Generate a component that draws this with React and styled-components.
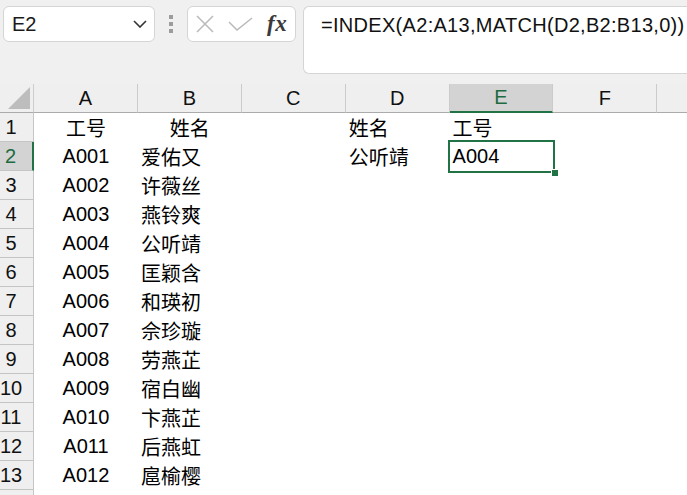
import styled, { createGlobalStyle } from 'styled-components';

const GlobalStyle = createGlobalStyle`
  html, body {
    margin: 0;
    background: #ffffff;
  }
  body {
    font-family: 'Liberation Sans', 'Noto Sans CJK SC', sans-serif;
    overflow: hidden;
  }
`;

const Window = styled.div`
  width: 687px;
  height: 495px;
  overflow: hidden;
  background: #ffffff;
`;

const TopBar = styled.div`
  display: flex;
  align-items: flex-start;
  height: 84px;
  box-sizing: border-box;
  padding: 6px 0 0 3px;
  background: #f0f0f0;
`;

const Box = styled.div`
  box-sizing: border-box;
  height: 36px;
  background: #ffffff;
  border: 1px solid #d5d5d5;
  border-radius: 6px;
`;

const NameBox = styled(Box)`
  width: 152px;
  display: flex;
  align-items: center;
  justify-content: space-between;
  padding: 0 7px 0 8px;
  font-size: 20px;
  color: #1a1a1a;
`;

const Grip = styled.div`
  width: 32px;
  height: 36px;
  display: flex;
  flex-direction: column;
  align-items: center;
  justify-content: center;
  gap: 3px;

  span {
    width: 4px;
    height: 4px;
    background: #9c9c9c;
  }
`;

const FormulaButtons = styled(Box)`
  width: 109px;
  display: flex;
  align-items: center;
  padding: 0 0 0 8px;
  gap: 14px;
`;

const Fx = styled.span`
  font-family: 'Liberation Serif', serif;
  font-style: italic;
  font-weight: bold;
  font-size: 23px;
  color: #3a3a3a;
  letter-spacing: 0.5px;
`;

const FormulaInput = styled(Box)`
  flex: 1;
  height: 68px;
  margin-left: 7px;
  border-right: none;
  border-radius: 6px 0 0 6px;
  padding-left: 17px;
  line-height: 36px;
  font-size: 20px;
  letter-spacing: 0.3px;
  color: #111111;
  white-space: nowrap;
  overflow: hidden;
`;

const Sheet = styled.div`
  display: grid;
  grid-template-columns: 34px repeat(7, 103.9px);
  grid-auto-rows: 29px;
`;

const Corner = styled.div`
  position: relative;
  background: #efefef;
  border-right: 1px solid #cdcdcd;
  border-bottom: 1px solid #ababab;

  svg {
    position: absolute;
    right: 3px;
    bottom: 3px;
  }
`;

const ColHeader = styled.div`
  box-sizing: border-box;
  display: flex;
  align-items: center;
  justify-content: center;
  font-size: 20px;
  background: ${(p) => (p.$active ? '#d3d3d3' : '#efefef')};
  color: ${(p) => (p.$active ? '#1d6b40' : '#111111')};
  border-right: 1px solid #cbcbcb;
  border-bottom: ${(p) => (p.$active ? '2px solid #217346' : '1px solid #ababab')};
`;

const RowHeader = styled.div`
  box-sizing: border-box;
  display: flex;
  align-items: center;
  justify-content: center;
  padding-right: 11px;
  font-size: 20px;
  background: ${(p) => (p.$active ? '#d3d3d3' : '#efefef')};
  color: ${(p) => (p.$active ? '#1d6b40' : '#111111')};
  border-right: ${(p) => (p.$active ? '2px solid #217346' : '1px solid #c6c6c6')};
  border-bottom: 1px solid #c4c4c4;
`;

const Cell = styled.div`
  position: relative;
  box-sizing: border-box;
  padding: 0 3px;
  display: flex;
  align-items: center;
  justify-content: ${(p) => (p.$align === 'center' ? 'center' : 'flex-start')};
  font-size: 20px;
  color: #000000;
  white-space: nowrap;
  outline: ${(p) => (p.$selected ? '2px solid #217346' : 'none')};
  z-index: ${(p) => (p.$selected ? 1 : 0)};
`;

const FillHandle = styled.span`
  position: absolute;
  right: -5px;
  bottom: -5px;
  width: 6px;
  height: 6px;
  background: #217346;
  border: 1px solid #ffffff;
  border-width: 1px 0 0 1px;
`;

// G is only partly on screen, so its letter falls outside the window
const COLS = ['A', 'B', 'C', 'D', 'E', 'F', 'G'];
const VISIBLE_LABELS = ['A', 'B', 'C', 'D', 'E', 'F'];

const DATA = [
  ['工号', '姓名', '', '姓名', '工号'],
  ['A001', '爱佑又', '', '公听靖', 'A004'],
  ['A002', '许薇丝'],
  ['A003', '燕铃爽'],
  ['A004', '公听靖'],
  ['A005', '匡颖含'],
  ['A006', '和瑛初'],
  ['A007', '佘珍璇'],
  ['A008', '劳燕芷'],
  ['A009', '宿白幽'],
  ['A010', '卞燕芷'],
  ['A011', '后燕虹'],
  ['A012', '扈榆樱'],
];

const alignFor = (row, col) => {
  if (col === 0) return 'center';
  if (col === 1 && row === 0) return 'center';
  return 'left';
};

const Chevron = () => (
  <svg width="14" height="8" viewBox="0 0 14 8">
    <path d="M1 1 L7 7 L13 1" fill="none" stroke="#333" strokeWidth="1.6" />
  </svg>
);

const CancelIcon = () => (
  <svg width="18" height="18" viewBox="0 0 18 18">
    <path d="M1 1 L17 17 M17 1 L1 17" fill="none" stroke="#b9b9b9" strokeWidth="1.5" />
  </svg>
);

const EnterIcon = () => (
  <svg width="25" height="14" viewBox="0 0 25 14">
    <path d="M1 5 L9 13 L24 1" fill="none" stroke="#b9b9b9" strokeWidth="1.5" />
  </svg>
);

export default function App() {
  return (
    <Window>
      <GlobalStyle />
      <TopBar>
        <NameBox>
          <span>E2</span>
          <Chevron />
        </NameBox>
        <Grip>
          <span />
          <span />
          <span />
        </Grip>
        <FormulaButtons>
          <CancelIcon />
          <EnterIcon />
          <Fx>fx</Fx>
        </FormulaButtons>
        <FormulaInput>=INDEX(A2:A13,MATCH(D2,B2:B13,0))</FormulaInput>
      </TopBar>
      <Sheet>
        <Corner>
          <svg width="22" height="22" viewBox="0 0 22 22">
            <path d="M22 0 L22 22 L0 22 Z" fill="#bdbdbd" />
          </svg>
        </Corner>
        {COLS.map((c) => (
          <ColHeader key={c} $active={c === 'E'}>
            {VISIBLE_LABELS.includes(c) ? c : ''}
          </ColHeader>
        ))}
        {DATA.map((row, r) => [
          <RowHeader key={`h${r}`} $active={r === 1}>
            {r + 1}
          </RowHeader>,
          ...COLS.map((c, ci) => {
            const selected = r === 1 && c === 'E';
            return (
              <Cell key={`${c}${r}`} $align={alignFor(r, ci)} $selected={selected}>
                {row[ci] || ''}
                {selected && <FillHandle />}
              </Cell>
            );
          }),
        ])}
        <RowHeader />
      </Sheet>
    </Window>
  );
}
